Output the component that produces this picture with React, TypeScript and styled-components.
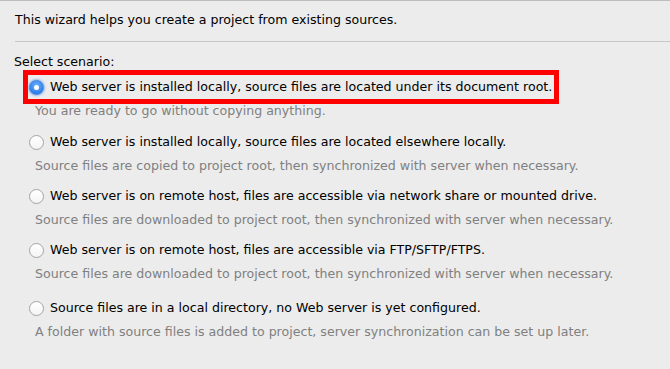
import React from 'react';
import styled, { createGlobalStyle } from 'styled-components';

interface Scenario {
  id: string;
  label: string;
  hint: string;
}

const scenarios: Scenario[] = [
  {
    id: 'local-docroot',
    label: 'Web server is installed locally, source files are located under its document root.',
    hint: 'You are ready to go without copying anything.',
  },
  {
    id: 'local-elsewhere',
    label: 'Web server is installed locally, source files are located elsewhere locally.',
    hint: 'Source files are copied to project root, then synchronized with server when necessary.',
  },
  {
    id: 'remote-share',
    label: 'Web server is on remote host, files are accessible via network share or mounted drive.',
    hint: 'Source files are downloaded to project root, then synchronized with server when necessary.',
  },
  {
    id: 'remote-ftp',
    label: 'Web server is on remote host, files are accessible via FTP/SFTP/FTPS.',
    hint: 'Source files are downloaded to project root, then synchronized with server when necessary.',
  },
  {
    id: 'no-server',
    label: 'Source files are in a local directory, no Web server is yet configured.',
    hint: 'A folder with source files is added to project, server synchronization can be set up later.',
  },
];

const App: React.FC = () => {
  const [selected, setSelected] = React.useState(scenarios[0].id);

  return (
    <>
      <GlobalStyle />
      <Wizard>
        <Intro>This wizard helps you create a project from existing sources.</Intro>
        <Section>
          <SectionTitle>Select scenario:</SectionTitle>
          <Options>
            {scenarios.map((s, i) => (
              <Option key={s.id} first={i === 0} last={i === scenarios.length - 1}>
                <OptionLine highlighted={i === 0} onClick={() => setSelected(s.id)}>
                  <Radio checked={selected === s.id} />
                  <Label>{s.label}</Label>
                </OptionLine>
                <Hint>{s.hint}</Hint>
              </Option>
            ))}
          </Options>
        </Section>
      </Wizard>
    </>
  );
};

export default App;

const GlobalStyle = createGlobalStyle`
  html, body {
    margin: 0;
    padding: 0;
    background: #ececec;
  }
  body {
    font-family: 'DejaVu Sans', 'Liberation Sans', sans-serif;
    color: #000;
  }
`;

const Wizard = styled.div`
  width: 670px;
  height: 369px;
  box-sizing: border-box;
  border-top: 1px solid #bdbdbd;
  background: #ececec;
  overflow: hidden;
`;

const Intro = styled.div`
  margin: 0 0 0 15px;
  padding: 10px 0 13px;
  border-bottom: 1px solid #c8c8c8;
  font-size: 12.6px;
  line-height: 17px;
`;

const Section = styled.div`
  padding: 12px 0 0 14px;
`;

const SectionTitle = styled.div`
  font-size: 12.6px;
  line-height: 16px;
`;

const Options = styled.div`
  display: flex;
  flex-direction: column;
`;

const Option = styled.div<{ first?: boolean; last?: boolean }>`
  display: flex;
  flex-direction: column;
  margin-top: ${({ last }) => (last ? '4px' : '0')};
  margin-bottom: ${({ first }) => (first ? '1px' : '0')};
`;

const OptionLine = styled.div<{ highlighted?: boolean }>`
  display: flex;
  align-items: center;
  gap: 6px;
  width: max-content;
  margin-left: ${({ highlighted }) => (highlighted ? '9px' : '15px')};
  padding: ${({ highlighted }) => (highlighted ? '4px 2px 4px 1px' : '9px 0')};
  border: ${({ highlighted }) => (highlighted ? '5px solid #ff0000' : 'none')};
  height: 16px;
  cursor: default;
`;

const Radio = styled.span<{ checked: boolean }>`
  flex: none;
  position: relative;
  width: 15px;
  height: 15px;
  border-radius: 50%;
  box-sizing: border-box;
  border: 1px solid ${({ checked }) => (checked ? '#3a7fe0' : '#a4a4a4')};
  background: ${({ checked }) =>
    checked
      ? 'radial-gradient(circle at 50% 35%, #6cb2ff 0%, #2f80ea 70%, #1f6fd8 100%)'
      : 'linear-gradient(#ffffff, #f4f4f4)'};
  box-shadow: ${({ checked }) => (checked ? '0 0 2px 1px rgba(90,150,240,0.6)' : 'none')};

  &::after {
    content: '';
    display: ${({ checked }) => (checked ? 'block' : 'none')};
    position: absolute;
    left: 4px;
    top: 4px;
    width: 5px;
    height: 5px;
    border-radius: 50%;
    background: #fff;
  }
`;

const Label = styled.span`
  font-size: 12.6px;
  line-height: 16px;
  white-space: nowrap;
`;

const Hint = styled.div`
  margin-left: 21px;
  padding-bottom: 6px;
  font-size: 12.6px;
  line-height: 14px;
  color: #808080;
  white-space: nowrap;
`;
